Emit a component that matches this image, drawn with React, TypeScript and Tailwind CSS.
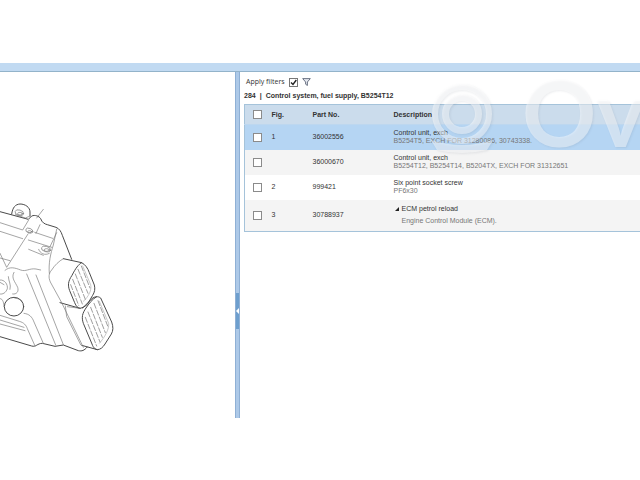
import { useState } from "react";

type Part = {
  fig: string;
  partNo: string;
  title: string;
  note: string;
  expanded?: boolean;
};

const parts: Part[] = [
  { fig: "1", partNo: "36002556", title: "Control unit, exch", note: "B5254T5, EXCH FOR 31280086, 30743338." },
  { fig: "", partNo: "36000670", title: "Control unit, exch", note: "B5254T12, B5254T14, B5204TX, EXCH FOR 31312651" },
  { fig: "2", partNo: "999421", title: "Six point socket screw", note: "PF6x30" },
  { fig: "3", partNo: "30788937", title: "ECM petrol reload", note: "Engine Control Module (ECM).", expanded: true },
];

const rowColors = ["bg-[#b5d5f3]", "bg-[#f4f4f4]", "bg-white", "bg-[#f4f4f4]"];

const boxStyle =
  "block size-[9px] appearance-none border border-[#8b8b8b] bg-white checked:bg-[#555]";

function ControlUnitDrawing() {
  return (
    <svg viewBox="0 0 390 540" className="block h-[180px] w-[130px]" fill="none" strokeLinejoin="round" strokeLinecap="round" role="img" aria-label="Control unit">
      <g stroke="#4a4a4a" strokeWidth="3">
        <path d="M0 65L85 88L95 78C105 74 117 78 122 86C126 98 134 102 142 104L168 112C178 116 183 124 187 136L215 208" />
        <path d="M35 72C38 52 46 43 60 42C76 42 90 52 90 66V78" />
        <path d="M0 440L95 468C108 472 112 460 127 460L165 469L190 465L235 482C246 484 252 482 262 471" />
        <path d="M190 206L245 218C256 224 263 234 268 248L283 285C286 297 284 306 278 316L262 343C254 350 248 353 240 355L180 338" />
        <path d="M245 218C236 222 226 236 216 256C204 274 203 286 209 302L224 338C229 350 234 354 240 355" />
        <path d="M248 354L276 326C284 319 294 318 302 324L335 396C340 410 340 422 334 432L315 462C308 473 302 478 292 479L245 466" />
        <path d="M290 320C276 328 266 342 258 354C247 370 244 382 250 400L276 462C280 474 286 478 292 479" />
        <ellipse cx="42" cy="350" rx="29" ry="28" />
      </g>
      <g stroke="#777" strokeWidth="2">
        <path d="M190 206C176 214 164 226 155 240C146 250 145 262 151 276L184 336L250 472M196 348L200 380L242 464M202 350L240 355" />
        <path d="M170 118L160 165C152 190 145 220 148 250" />
        <ellipse cx="58" cy="68" rx="13" ry="8" transform="rotate(15 58 68)" />
        <ellipse cx="60" cy="71" rx="7" ry="4" />
        <ellipse cx="88" cy="122" rx="11" ry="7" transform="rotate(20 88 122)" />
        <ellipse cx="89" cy="125" rx="6" ry="3" />
        <ellipse cx="138" cy="177" rx="14" ry="8" transform="rotate(15 138 177)" />
        <ellipse cx="140" cy="180" rx="8" ry="4" />
        <path d="M0 98L68 120L86 90M46 74L76 84L90 78M104 127L158 145M0 124L68 146M85 150L155 172M86 178L130 196" />
        <path d="M130 58L110 84M120 104L108 130M84 132L20 232L0 190M0 204L30 212M170 128L150 170M116 178C120 190 134 198 148 190" />
        <path d="M15 241C30 228 46 234 62 240S88 234 108 237L122 240" />
        <path d="M42 247C32 264 46 276 53 292C57 304 50 314 38 312M25 260C26 276 34 282 30 298M0 270C14 268 24 284 22 296C18 308 8 314 0 312M0 277L12 284" />
        <path d="M80 252L167 465M108 255L190 464M72 370C88 372 96 380 102 396L130 460M0 376L58 394C72 398 78 405 82 416L105 468M0 390L72 412M0 402L75 422" />
        <path d="M12 350C12 332 4 324 0 326M66 333C60 328 54 325 44 324" />
      </g>
      <g stroke="#858585" strokeWidth="2.4" strokeDasharray="16 6">
        <path d="M244 228L270 294M234 238L264 310M226 252L256 328M218 268L247 342M212 284L236 346" />
        <path d="M294 332L323 408M282 340L316 428M272 352L307 442M264 366L300 456M256 382L290 468" />
      </g>
      <g stroke="#999" strokeWidth="1.6">
        <path d="M248 228L272 284C276 300 266 320 250 334M298 334L326 400C328 416 316 440 298 460" />
      </g>
    </svg>
  );
}

function Watermark() {
  return (
    <div className="pointer-events-none absolute inset-0 overflow-hidden">
      <svg viewBox="0 0 72 90" className="absolute top-1 left-[186px] h-[90px] w-[72px] drop-shadow-[1px_1px_1px_rgb(80_90_110/0.25)]" fill="none" stroke="#ffffff" strokeOpacity="0.45">
        <circle cx="36" cy="38" r="27" strokeWidth="6" />
        <circle cx="36" cy="38" r="16.5" strokeWidth="7" />
        <path d="M5 64Q36 74 67 64L61 74Q36 80 11 74Z" fill="#ffffff" fillOpacity="0.45" stroke="none" />
      </svg>
      <span className="absolute top-[-6px] left-[282px] font-['Lato',sans-serif] text-[92px] leading-none font-bold text-white/45 [text-shadow:1px_1px_2px_rgb(80_90_110/0.1)]">Ov</span>
    </div>
  );
}

export default function App() {
  const [filtered, setFiltered] = useState(true);
  return (
    <div className="min-h-screen bg-white pt-[63px] font-['Liberation_Sans',Arial,sans-serif] text-[7px] leading-[8px] text-[#333]">
      <div className="h-[9px] border-b border-[#93b3ca] bg-[#c1daf2]" />
      <div className="grid grid-cols-[235px_5px_minmax(0,1fr)]">
        <section className="pt-[118px] pb-12">
          <ControlUnitDrawing />
        </section>
        <div className="flex items-center border-x border-[#8fb0d5] bg-[#adc9e8] pt-[132px]">
          <button aria-label="Collapse panel" className="flex h-9 w-full items-center justify-center bg-[#6e9fce]">
            <svg viewBox="0 0 3 6" className="h-1.5 w-[3px]"><path d="M3 0v6L0 3z" fill="#fff" /></svg>
          </button>
        </div>
        <section className="relative min-w-0 pt-1.5 pl-1">
          <div className="flex h-2 items-center gap-1 pl-0.5">
            <label htmlFor="filters" className="font-['Open_Sans','Noto_Sans',sans-serif]">Apply filters</label>
            <span className="relative block">
              <input id="filters" type="checkbox" checked={filtered} onChange={() => setFiltered(!filtered)} className="block size-[9px] appearance-none border border-[#777] bg-white" />
              {filtered && (
                <svg viewBox="0 0 9 9" className="pointer-events-none absolute inset-0 size-[9px]" fill="none" stroke="#222" strokeWidth="1.4"><path d="M2 4.500L4 6.500L7.300 2" /></svg>
              )}
            </span>
            <button aria-label="Filter">
              <svg viewBox="0 0 9 8" className="h-2 w-[9px]" fill="#e4e7ef" stroke="#5e6678" strokeWidth="0.9"><path d="M.7.600h7.600L5.400 4v3.500L3.600 6.200V4z" /></svg>
            </button>
          </div>
          <h1 className="mt-1.5 mb-1 flex gap-1 font-bold">
            <span>284</span>
            <span>|</span>
            <span>Control system, fuel supply, B5254T12</span>
          </h1>
          <table className="w-full table-fixed border-collapse border-y border-l border-[#a5c3da] text-left">
            <colgroup>
              <col className="w-[27px]" />
              <col className="w-[41px]" />
              <col className="w-[81px]" />
              <col />
            </colgroup>
            <thead>
              <tr className="h-5 border-b border-[#bdd7ef] bg-[#cbdcec]">
                <th className="pl-2"><input type="checkbox" aria-label="Select all parts" className={boxStyle} /></th>
                <th>Fig.</th>
                <th>Part No.</th>
                <th>Description</th>
              </tr>
            </thead>
            <tbody>
              {parts.map((part, i) => (
                <tr key={part.partNo} className={`${rowColors[i]} ${part.expanded ? "h-8" : "h-[25px]"}`}>
                  <td className="pl-2"><input type="checkbox" aria-label={`Select part ${part.partNo}`} className={boxStyle} /></td>
                  <td>{part.fig}</td>
                  <td>{part.partNo}</td>
                  {part.expanded ? (
                    <td>
                      <div className="flex items-center gap-0.5">
                        <svg viewBox="0 0 6 6" className="size-1.5"><path d="M5 1v4H1z" fill="#222" /></svg>
                        {part.title}
                      </div>
                      <div className="mt-1 pl-2 text-[#777]">{part.note}</div>
                    </td>
                  ) : (
                    <td>
                      <div>{part.title}</div>
                      <div className="text-[#777]">{part.note}</div>
                    </td>
                  )}
                </tr>
              ))}
            </tbody>
          </table>
          <Watermark />
        </section>
      </div>
    </div>
  );
}
